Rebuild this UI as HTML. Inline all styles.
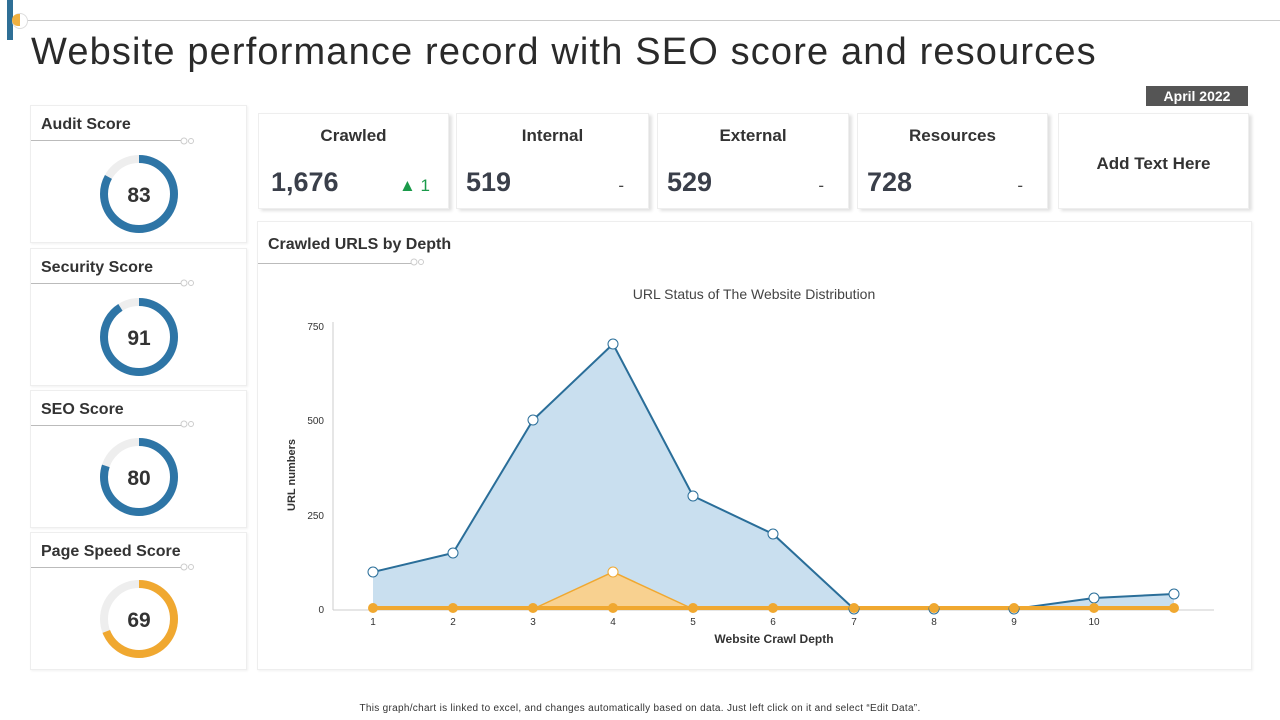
<!DOCTYPE html>
<html><head><meta charset="utf-8"><style>
body{margin:0;width:1280px;height:720px;background:#fff;position:relative;overflow:hidden;font-family:"Liberation Sans",Arial,sans-serif;color:#333}
.a{position:absolute}
.card{position:absolute;background:#fff;border:1px solid #eee;box-shadow:1px 1px 2px rgba(0,0,0,.06)}
.kpi{position:absolute;background:#fff;border:1px solid #eee;box-shadow:3px 2px 3px rgba(0,0,0,.12)}
.kt{position:absolute;left:0;right:0;top:12px;text-align:center;font-size:17px;font-weight:bold;color:#333}
.kv{position:absolute;left:12px;top:53px;font-size:27px;font-weight:bold;color:#3a3f4a}
.kd{position:absolute;right:24px;top:62px;font-size:17px;color:#444}
.st{position:absolute;left:10px;top:10px;font-size:16px;font-weight:bold;color:#333}
.sl{position:absolute;left:0;top:34px;width:150px;height:1px;background:#bbb}
</style></head><body>
<div class="a" style="left:7px;top:0;width:6px;height:40px;background:#2e6f96"></div>
<div class="a" style="left:16px;top:20px;width:1264px;height:1px;background:#ccc"></div>
<div class="a" style="left:12px;top:13px;width:14px;height:14px;border-radius:50%;border:1px solid #ddd;background:#fff"></div>
<div class="a" style="left:12px;top:14px;width:8px;height:12px;border-radius:6px 0 0 6px;background:#f0b040"></div>
<div class="a" style="left:31px;top:31px;font-size:38px;color:#2a2a2a;letter-spacing:1.15px;white-space:nowrap">Website performance record with SEO score and resources</div>
<div class="a" style="left:1146px;top:86px;width:102px;height:20px;background:#555;color:#fff;font-size:14px;font-weight:bold;text-align:center;line-height:20px">April 2022</div>

<div class="card" style="left:30px;top:105px;width:215px;height:136px"><div class="st">Audit Score</div><div class="sl"></div></div>
<div class="card" style="left:30px;top:248px;width:215px;height:136px"><div class="st">Security Score</div><div class="sl"></div></div>
<div class="card" style="left:30px;top:390px;width:215px;height:136px"><div class="st">SEO Score</div><div class="sl"></div></div>
<div class="card" style="left:30px;top:532px;width:215px;height:136px"><div class="st">Page Speed Score</div><div class="sl"></div></div>

<svg class="a" style="left:0;top:0" width="260" height="720">
<g fill="none" stroke-width="8">
<circle cx="139" cy="194" r="35" stroke="#eee"/><circle cx="139" cy="194" r="35" stroke="#2e75a6" stroke-dasharray="182.5 220" transform="rotate(-90 139 194)"/>
<circle cx="139" cy="337" r="35" stroke="#eee"/><circle cx="139" cy="337" r="35" stroke="#2e75a6" stroke-dasharray="200 220" transform="rotate(-90 139 337)"/>
<circle cx="139" cy="477" r="35" stroke="#eee"/><circle cx="139" cy="477" r="35" stroke="#2e75a6" stroke-dasharray="176 220" transform="rotate(-90 139 477)"/>
<circle cx="139" cy="619" r="35" stroke="#eee"/><circle cx="139" cy="619" r="35" stroke="#f0a830" stroke-dasharray="152 220" transform="rotate(-90 139 619)"/>
</g>
<g font-size="21" font-weight="bold" fill="#333" text-anchor="middle">
<text x="139" y="202">83</text><text x="139" y="345">91</text><text x="139" y="485">80</text><text x="139" y="627">69</text></g>
<g fill="#fff" stroke="#ccc"><circle cx="184" cy="141" r="3"/><circle cx="191" cy="141" r="2.5"/><circle cx="184" cy="283" r="3"/><circle cx="191" cy="283" r="2.5"/><circle cx="184" cy="424" r="3"/><circle cx="191" cy="424" r="2.5"/><circle cx="184" cy="567" r="3"/><circle cx="191" cy="567" r="2.5"/></g>
</svg>

<div class="kpi" style="left:258px;top:113px;width:189px;height:94px"><div class="kt">Crawled</div><div class="kv">1,676</div><div class="kd" style="color:#1a9a4a;right:18px">▲ 1</div></div>
<div class="kpi" style="left:456px;top:113px;width:191px;height:94px"><div class="kt">Internal</div><div class="kv" style="left:9px">519</div><div class="kd">-</div></div>
<div class="kpi" style="left:657px;top:113px;width:190px;height:94px"><div class="kt">External</div><div class="kv" style="left:9px">529</div><div class="kd">-</div></div>
<div class="kpi" style="left:857px;top:113px;width:189px;height:94px"><div class="kt">Resources</div><div class="kv" style="left:9px">728</div><div class="kd">-</div></div>
<div class="kpi" style="left:1058px;top:113px;width:189px;height:94px"><div class="kt" style="top:40px">Add Text Here</div></div>

<div class="card" style="left:257px;top:221px;width:993px;height:447px"><div class="a" style="left:10px;top:14px;font-size:16px;font-weight:bold;color:#333">Crawled URLS by Depth</div><div class="a" style="left:0;top:41px;width:155px;height:1px;background:#bbb"></div></div>

<svg class="a" style="left:0;top:0" width="1280" height="720">
<circle cx="414" cy="262" r="3" fill="#fff" stroke="#ccc"/><circle cx="421" cy="262" r="2.5" fill="#fff" stroke="#ccc"/>
<text x="754" y="299" font-size="14" fill="#444" text-anchor="middle">URL Status of The Website Distribution</text>
<line x1="333" y1="322" x2="333" y2="610" stroke="#ccc"/>
<line x1="333" y1="610" x2="1214" y2="610" stroke="#ccc"/>
<g font-size="10" fill="#333" text-anchor="end"><text x="324" y="330">750</text><text x="324" y="424">500</text><text x="324" y="519">250</text><text x="324" y="613">0</text></g>
<g font-size="10" fill="#333" text-anchor="middle"><text x="373" y="625">1</text><text x="453" y="625">2</text><text x="533" y="625">3</text><text x="613" y="625">4</text><text x="693" y="625">5</text><text x="773" y="625">6</text><text x="854" y="625">7</text><text x="934" y="625">8</text><text x="1014" y="625">9</text><text x="1094" y="625">10</text></g>
<text x="774" y="643" font-size="12" font-weight="bold" fill="#333" text-anchor="middle">Website Crawl Depth</text>
<text transform="translate(295 475) rotate(-90)" font-size="11" font-weight="bold" fill="#333" text-anchor="middle">URL numbers</text>
<polygon points="373,609 373,572 453,553 533,420 613,344 693,496 773,534 854,609 934,609 1014,609 1094,598 1174,594 1174,609" fill="#c9dfef"/>
<polyline points="373,572 453,553 533,420 613,344 693,496 773,534 854,609 934,609 1014,609 1094,598 1174,594" fill="none" stroke="#2a6e99" stroke-width="2"/>
<polygon points="533,609 613,572 693,609" fill="#f8d190" stroke="#f0a830" stroke-width="1.5"/>
<line x1="373" y1="608" x2="1174" y2="608" stroke="#f0a830" stroke-width="4"/>
<g fill="#fff" stroke="#2a6e99" stroke-width="1"><circle cx="373" cy="572" r="5"/><circle cx="453" cy="553" r="5"/><circle cx="533" cy="420" r="5"/><circle cx="613" cy="344" r="5"/><circle cx="693" cy="496" r="5"/><circle cx="773" cy="534" r="5"/><circle cx="854" cy="609" r="5"/><circle cx="934" cy="609" r="5"/><circle cx="1014" cy="609" r="5"/><circle cx="1094" cy="598" r="5"/><circle cx="1174" cy="594" r="5"/></g>
<circle cx="613" cy="572" r="5" fill="#fff" stroke="#f0a830"/>
<g fill="#f0a830"><circle cx="373" cy="608" r="5"/><circle cx="453" cy="608" r="5"/><circle cx="533" cy="608" r="5"/><circle cx="613" cy="608" r="5"/><circle cx="693" cy="608" r="5"/><circle cx="773" cy="608" r="5"/><circle cx="854" cy="608" r="5"/><circle cx="934" cy="608" r="5"/><circle cx="1014" cy="608" r="5"/><circle cx="1094" cy="608" r="5"/><circle cx="1174" cy="608" r="5"/></g>
</svg>
<div class="a" style="left:0;width:1280px;top:703px;text-align:center;font-size:10px;letter-spacing:0.3px;color:#333">This graph/chart is linked to excel, and changes automatically based on data. Just left click on it and select “Edit Data”.</div>
</body></html>
